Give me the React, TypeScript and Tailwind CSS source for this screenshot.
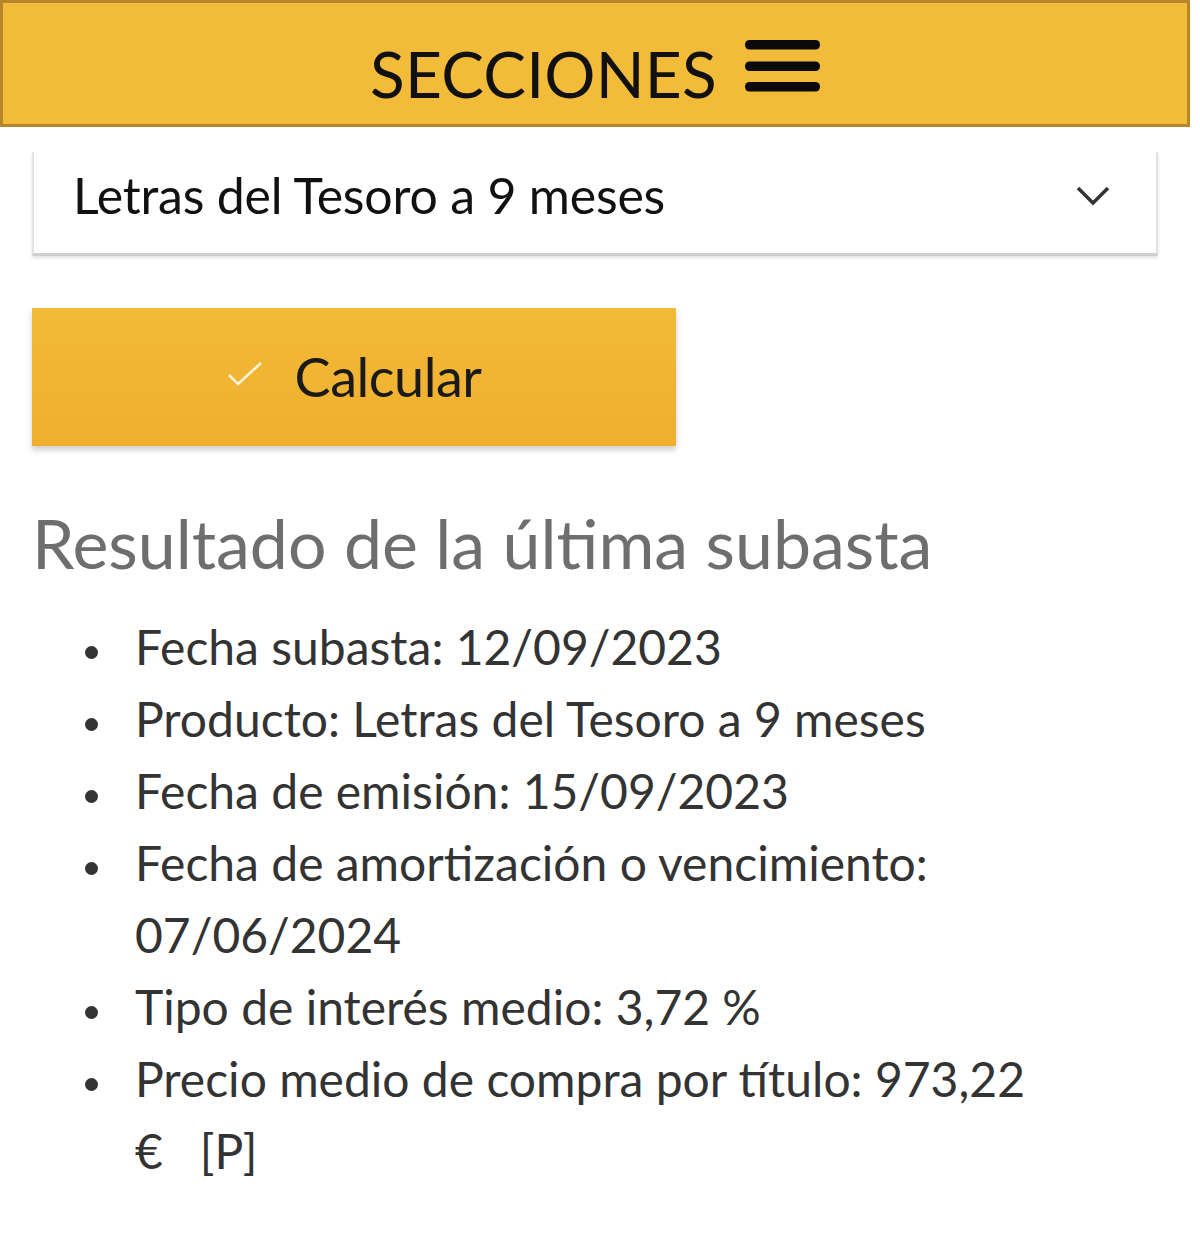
import React from "react";

export default function App() {
  const items: React.ReactNode[] = [
    "Fecha subasta: 12/09/2023",
    "Producto: Letras del Tesoro a 9 meses",
    "Fecha de emisión: 15/09/2023",
    "Fecha de amortización o vencimiento: 07/06/2024",
    "Tipo de interés medio: 3,72 %",
    <>Precio medio de compra por título: 973,22 €&nbsp;&nbsp; [P]</>,
  ];
  return (
    <div className="w-[1200px] h-[1257px] bg-white overflow-hidden" style={{ fontFamily: "Lato, 'Open Sans', sans-serif" }}>
      <header className="w-[1190px] h-[127px] bg-[#F2BB3A] border-[3px] border-[#B8862A] flex items-center justify-center gap-[28px] pt-[20px]">
        <span className="text-[64px] leading-none text-[#111] tracking-[0.2px]">SECCIONES</span>
        <svg width="75" height="52" viewBox="0 0 75 52" className="mt-[-16px]">
          <rect x="0" y="0" width="75" height="9.5" rx="4.5" fill="#0a0a0a" />
          <rect x="0" y="21.5" width="75" height="9.5" rx="4.5" fill="#0a0a0a" />
          <rect x="0" y="42" width="75" height="9.5" rx="4.5" fill="#0a0a0a" />
        </svg>
      </header>

      <div className="pl-[32px] pr-[42px]">
        <div className="mt-[25px] h-[104px] border-l-2 border-r-2 border-b-[3px] border-l-[#e3e3e3] border-r-[#e3e3e3] border-b-[#cfcfcf] shadow-[0_2px_3px_rgba(0,0,0,0.12)] flex items-center justify-between pl-[39px] pr-[46px]">
          <span className="text-[50px] text-[#111] leading-none tracking-[-0.2px] mt-[-16px]">Letras del Tesoro a 9 meses</span>
          <svg width="34" height="22" viewBox="0 0 34 22" className="mt-[-14px]">
            <path d="M2 3 L17 18 L32 3" fill="none" stroke="#333" strokeWidth="3.5" />
          </svg>
        </div>

        <button className="mt-[52px] w-[644px] h-[138px] bg-gradient-to-b from-[#F2BA38] to-[#F0AE2E] shadow-[0_4px_6px_rgba(0,0,0,0.2)] flex items-center justify-center gap-[32px] pl-[0px]">
          <svg width="36" height="26" viewBox="0 0 36 26" className="mt-[-6px]">
            <path d="M2 14 L11 23 L34 2" fill="none" stroke="#FBF3DA" strokeWidth="2.5" />
          </svg>
          <span className="text-[54px] text-[#1a1a1a] leading-none tracking-[-0.5px]">Calcular</span>
        </button>

        <h2 className="mt-[63px] text-[68px] leading-none text-[#6e6e6e]">
          Resultado de la última subasta
        </h2>

        <ul className="mt-[34px] w-[1013px] pl-[53px] text-[48px] leading-[72px] text-[#333]">
          {items.map((t, i) => (
            <li key={i} className="flex">
              <span className="w-[50px] shrink-0 flex items-start pt-[35px]">
                <span className="w-[13px] h-[13px] rounded-full bg-[#333]" />
              </span>
              <span>{t}</span>
            </li>
          ))}
        </ul>
      </div>
    </div>
  );
}
